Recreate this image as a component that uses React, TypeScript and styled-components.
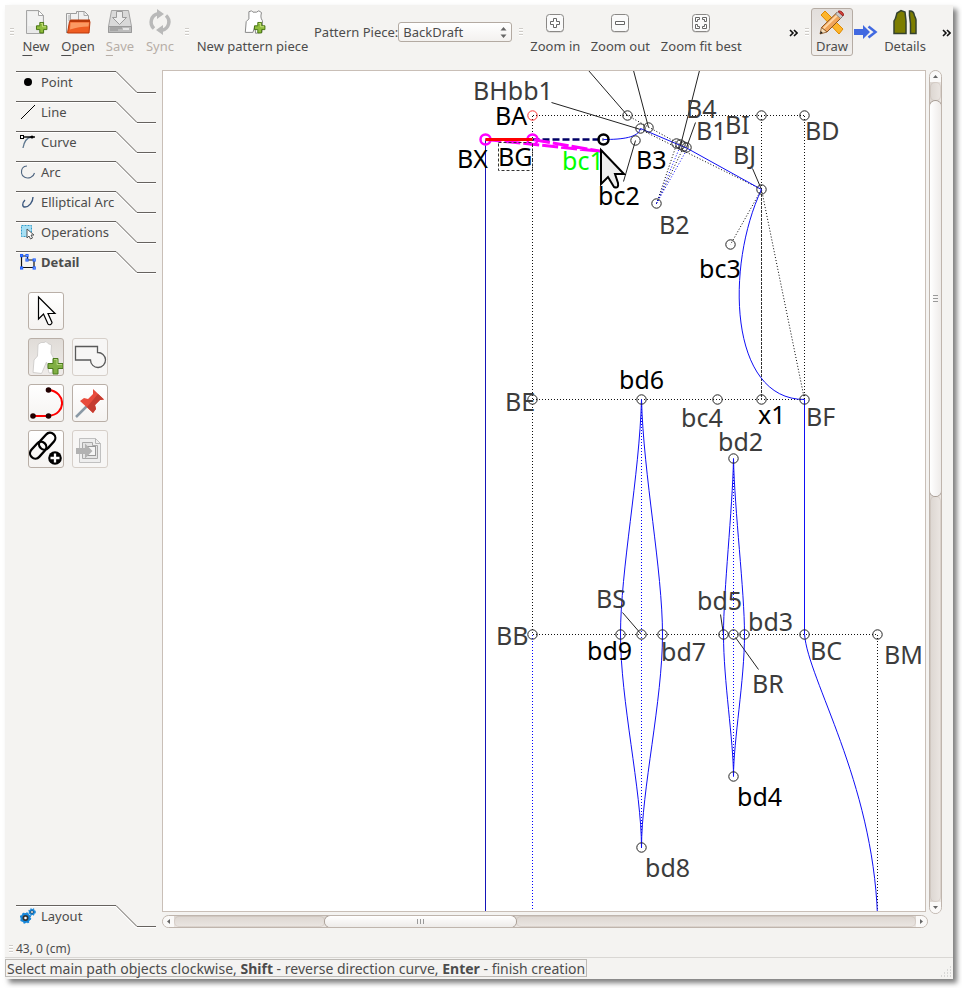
import React, { useState } from "react";
import styled, { createGlobalStyle, css } from "styled-components";

const GlobalStyle = createGlobalStyle`
  *, *::before, *::after { box-sizing: border-box; }
  body {
    margin: 0;
    background: #ffffff;
    color: #4c4c4c;
    font-family: "Noto Sans", "Open Sans", sans-serif;
    font-size: 13px;
    line-height: 16px;
  }
  button, select { font: inherit; color: inherit; margin: 0; }
`;

const Page = styled.div`
  display: flex;
  height: 100vh;
  min-height: 700px;
  padding: 5px 9px 9px 5px;
`;

const Window = styled.div`
  flex: 1;
  min-width: 0;
  display: flex;
  flex-direction: column;
  background: #f4f3f1;
  box-shadow: 4px 4px 5px 0 rgba(0, 0, 0, 0.5);
`;

/* ---------- Toolbar ---------- */

const ToolbarRow = styled.header`
  display: flex;
  align-items: center;
  height: 60px;
  flex: none;
  padding: 0 1px 6px 3px;
`;

const Grip = styled.span`
  flex: none;
  width: 4px;
  height: 8px;
  margin: 0 2px;
  background: repeating-linear-gradient(#cfccc8 0 1px, #ffffff 1px 2px, transparent 2px 3px);
`;

const ToolButton = styled.button<{ $width: number; $active?: boolean }>`
  flex: none;
  display: flex;
  flex-direction: column;
  align-items: center;
  justify-content: space-between;
  width: ${(p) => p.$width}px;
  height: 48px;
  padding: 0 0 1px;
  border: 1px solid ${(p) => (p.$active ? "#b5aca4" : "transparent")};
  border-radius: 3px;
  background: ${(p) => (p.$active ? "linear-gradient(#e2dedb, #f1efed)" : "none")};
  white-space: nowrap;
  &:disabled { color: #b7aea7; }
  u { text-underline-offset: 4px; text-decoration-thickness: 1px; text-decoration-skip-ink: none; }
`;

const Group = styled.div<{ $before?: number }>`
  display: flex;
  align-items: center;
  margin-left: ${(p) => p.$before ?? 0}px;
`;

const Spacer = styled.div`
  flex: 1;
`;

const PieceLabel = styled.label`
  white-space: nowrap;
`;

const SelectWrap = styled.div`
  position: relative;
  width: 114px;
  margin-right: 5px;
  svg { position: absolute; right: 5px; top: 4px; pointer-events: none; }
`;

const PieceSelect = styled.select`
  appearance: none;
  width: 100%;
  height: 20px;
  padding: 0 16px 0 4px;
  border: 1px solid #b3aaa2;
  border-radius: 3px;
  background: linear-gradient(#ffffff, #f3f1ef);
  line-height: 16px;
`;

const Overflow = styled.button<{ $before?: number }>`
  flex: none;
  width: 12px;
  height: 20px;
  margin-left: ${(p) => p.$before ?? 0}px;
  padding: 0;
  border: 0;
  background: none;
`;

const ArrowSlot = styled.span`
  display: flex;
  width: 25px;
  justify-content: center;
`;

/* ---------- Body ---------- */

const Body = styled.main`
  flex: 1;
  min-height: 0;
  display: flex;
  padding: 5px 11px 0 11px;
`;

const Sidebar = styled.nav`
  flex: none;
  width: 146px;
  display: flex;
  flex-direction: column;
  padding: 1px 0;
`;

const TabButton = styled.button<{ $bold?: boolean }>`
  position: relative;
  flex: none;
  display: flex;
  align-items: center;
  gap: 5px;
  width: 140px;
  height: 22px;
  margin-bottom: 8px;
  padding: 0 0 0 4px;
  border: 0;
  background: none;
  text-align: left;
  white-space: nowrap;
  font-weight: ${(p) => (p.$bold ? 700 : 400)};
  &:last-child { margin-bottom: 0; }
`;

const TabEdge = styled.svg`
  position: absolute;
  left: 0;
  top: 0;
`;

const Tools = styled.div`
  flex: 1;
  display: grid;
  grid-template-columns: 36px 36px;
  grid-auto-rows: 38px;
  gap: 8px;
  padding: 11px 0 0 12px;
`;

const Tool = styled.button<{ $pressed?: boolean; $solo?: boolean }>`
  display: flex;
  align-items: center;
  justify-content: center;
  padding: 0;
  border: 1px solid #b9afa7;
  border-radius: 3px;
  background: linear-gradient(#ffffff, #f5f3f1);
  ${(p) => p.$solo && css`grid-column: 1; & + * { grid-column: 1; }`}
  ${(p) => p.$pressed && css`background: linear-gradient(#e0dcd8, #efecea);`}
  &:disabled { border-color: #d6cfc9; background: #f7f6f5; }
`;

const Workspace = styled.section`
  flex: 1;
  min-width: 0;
  display: grid;
  grid-template-columns: minmax(0, 1fr) 13px;
  grid-template-rows: minmax(0, 1fr) 13px;
  gap: 3px;
`;

const Canvas = styled.div`
  border: 1px solid #c9bfb7;
  background: #ffffff;
  overflow: hidden;
`;

const Scene = styled.svg`
  display: block;
  width: 100%;
  height: 100%;
`;

const Scrollbar = styled.div<{ $vertical?: boolean }>`
  display: flex;
  flex-direction: ${(p) => (p.$vertical ? "column" : "row")};
  margin: ${(p) => (p.$vertical ? "0 0 -2px" : "0 -2px 0 0")};
  border: 1px solid #bfb5ad;
  border-radius: 7px;
  background: linear-gradient(${(p) => (p.$vertical ? "90deg" : "180deg")}, #dcd6d1, #ebe6e2);
  overflow: hidden;
`;

const ScrollStep = styled.button`
  flex: none;
  display: flex;
  align-items: center;
  justify-content: center;
  min-width: 11px;
  min-height: 11px;
  padding: 0;
  border: 0;
  background: #faf9f8;
`;

const ScrollGap = styled.div<{ $part: number }>`
  flex: ${(p) => p.$part} 1 0;
  box-shadow: inset 0 0 0 1px rgba(170, 155, 145, 0.25);
  border-radius: 5px;
`;

const Thumb = styled.div<{ $part: number; $vertical?: boolean }>`
  flex: ${(p) => p.$part} 1 0;
  display: flex;
  align-items: center;
  justify-content: center;
  border-radius: 6px;
  background: linear-gradient(${(p) => (p.$vertical ? "90deg" : "180deg")}, #ffffff, #eeebe9);
  box-shadow: 0 0 0 1px #a79d95;
`;

const CoordBar = styled.div`
  flex: none;
  display: flex;
  align-items: center;
  gap: 1px;
  height: 29px;
  padding: 12px 0 0 2px;
  font-size: 12px;
`;

const StatusBar = styled.footer`
  flex: none;
  display: flex;
  align-items: flex-end;
  justify-content: space-between;
  height: 22px;
  padding: 1px 1px 2px 0;
  border-top: 1px solid #d9d7d4;
`;

const StatusText = styled.div`
  height: 18px;
  padding: 0 1px;
  border: 1px solid #bdbab6;
  white-space: nowrap;
  font-size: 14px;
  line-height: 17px;
`;

/* ---------- Icons ---------- */

const PlusBadge = ({ x, y, s = 1 }: { x: number; y: number; s?: number }) => (
  <g transform={`translate(${x} ${y}) scale(${s})`}>
    <path d="M4 0.5h4V4h3.500v4H8v3.500H4V8H0.500V4H4z" fill="#8fbd3c" stroke="#467311" />
    <path d="M5 1.500h2V5h3.500" fill="none" stroke="#c9e27f" strokeWidth="1" />
  </g>
);

const PIECE = "M8 2l3-1 1.500 1.500h4L19 1l3 2c-1 4-1 6 1 9 .5 4-.5 8-.5 13l-7 1-1-8-2 7H4l1-12 3-3z";

const NewIcon = () => (
  <svg width="28" height="26" viewBox="0 0 28 26">
    <path d="M4.500 1.500h12l5 5v18h-17z" fill="#e9e9e9" stroke="#a5a5a5" />
    <path d="M6 3h10v4h4v10H6z" fill="#f5f5f5" opacity=".7" />
    <path d="M16.500 1.500l5 5h-5z" fill="#fff" stroke="#a5a5a5" />
    <PlusBadge x={14} y={13} s={0.95} />
  </svg>
);

const OpenIcon = () => (
  <svg width="28" height="26" viewBox="0 0 28 26">
    <path d="M2.500 24V4.500h10V2.500h8l4 4V20" fill="#f1f1f1" stroke="#9c9c9c" />
    <path d="M6.500 12V4.500M14.500 12V2.500M20 2.500v4h4M5 6v6" fill="none" stroke="#aaa" />
    <path d="M5 12l2-1.500h19V12z" fill="#b73a0a" />
    <path d="M5.500 12.500h20.500l-1 11.500H3.500z" fill="#ef5d22" stroke="#b9380a" />
    <path d="M6.500 13.500h18.500l-.5 4c-7 0-12 1-18.500 3z" fill="#fb9a63" />
  </svg>
);

const SaveIcon = () => (
  <svg width="28" height="26" viewBox="0 0 28 26">
    <path d="M5.500 1.500h17l3 16v6h-23v-6z" fill="#d9d9d9" stroke="#a4a4a4" />
    <path d="M2.500 17.500h23v6h-23z" fill="#bcbcbc" stroke="#9a9a9a" />
    <path d="M4 19h12M4 21h8" stroke="#8e8e8e" />
    <path d="M17 20h6" stroke="#e5e5e5" strokeWidth="2" />
    <path d="M10.500 2.500h6v6h4l-7 7-7-7h4z" fill="#ececec" stroke="#9a9a9a" />
  </svg>
);

const SyncIcon = () => (
  <svg width="26" height="26" viewBox="0 0 26 26" fill="none" stroke="#b9b9b9" strokeWidth="3.500">
    <path d="M7 19.500A8.500 8.500 0 0 1 11 4.800" />
    <path d="M19 6.500A8.500 8.500 0 0 1 15 21.200" />
    <path d="M10 0l7 5-7 5zM16 26l-7-5 7-5z" fill="#b9b9b9" stroke="none" />
  </svg>
);

const NewPieceIcon = () => (
  <svg width="28" height="26" viewBox="0 0 28 26">
    <path d={PIECE} transform="scale(.9) translate(3 1)" fill="#fff" stroke="#888" strokeWidth="1.100" />
    <PlusBadge x={15} y={13} s={0.95} />
  </svg>
);

const ZoomIcon = ({ kind }: { kind: "in" | "out" | "fit" }) => (
  <svg width="20" height="26" viewBox="0 0 20 26">
    <rect x="1.500" y="6.500" width="17" height="17" rx="3" fill="#c4c2c0" stroke="none" />
    <rect x="1.500" y="5.500" width="17" height="17" rx="3" fill="#fafafa" stroke="#8a8886" />
    <g fill="#fff" stroke="#666" strokeWidth="1">
      {kind === "in" && <path d="M8.500 9.500h3v3h3v3h-3v3h-3v-3h-3v-3h3z" />}
      {kind === "out" && <path d="M5.500 12.500h9v3h-9z" />}
      {kind === "fit" && (
        <path d="M4.500 8.500h4v2h-2v2h-2zM15.500 8.500h-4v2h2v2h2zM4.500 19.500h4v-2h-2v-2h-2zM15.500 19.500h-4v-2h2v-2h2z" />
      )}
    </g>
  </svg>
);

const DrawIcon = () => (
  <svg width="28" height="26" viewBox="0 0 28 26">
    <path d="M3 6l4-4 18 18-4 5z" fill="#fdb52b" stroke="#e08a00" />
    <path d="M3.500 18.500L19 3.500l5 4.500L9 23z" fill="#f0a45a" stroke="#8a5220" />
    <path d="M5.500 19.500L20 5.500" stroke="#ffd6a5" strokeWidth="2" />
    <path d="M3.500 18.500L2 25l7-2z" fill="#f6deb9" stroke="#8a5220" strokeWidth=".8" />
    <path d="M2 25l.8-3 2 2z" fill="#222" />
    <path d="M17.500 5L20 2.500l5 4.500-2.500 2.500z" fill="#c9c9c9" stroke="#777" strokeWidth=".7" />
    <path d="M20 2.500c2-2 7 2 5 4.500z" fill="#d9433c" stroke="#9a221d" />
  </svg>
);

const BlueArrow = () => (
  <svg width="24" height="14" viewBox="0 0 24 14">
    <path d="M0 4h9V0l7 7-7 7v-4H0z" fill="#4169e1" />
    <path d="M14.500 1.500L21.500 7l-7 5.500" fill="none" stroke="#4169e1" strokeWidth="2.500" />
  </svg>
);

const DetailsIcon = () => (
  <svg width="26" height="26" viewBox="0 0 26 26" fill="#7c7d00" stroke="#34422f" strokeWidth="1.500">
    <path d="M2 24.500V12c2-2 2-5 3-8l4-2.500 4 1.500 1 9v12.500z" />
    <path d="M18.500 24.500v-10l-1-8V2c3-.5 4 1 4.500 3 .5 3 2 4 2 6v13.500z" />
  </svg>
);

const MoreIcon = () => (
  <svg width="9" height="8" viewBox="0 0 9 8" fill="none" stroke="#111" strokeWidth="1.600">
    <path d="M1 1l3 3-3 3M5 1l3 3-3 3" />
  </svg>
);

const tabIcons: Record<string, React.ReactNode> = {
  Point: <circle cx="8" cy="8" r="4" fill="#000" />,
  Line: <path d="M1 15L15 1" stroke="#000" />,
  Curve: (
    <>
      <path d="M3 14C4 8 6 4 11 3" fill="none" stroke="#5f7890" strokeWidth="1.300" />
      <path d="M2 3h13" stroke="#000" strokeWidth="1.400" />
      <rect x=".5" y="1.500" width="3" height="3" fill="#fff" stroke="#000" />
      <circle cx="12" cy="3" r="1.600" />
    </>
  ),
  Arc: <path d="M7 2C3 2 1 5 1.500 9c.5 4 5 6 9 4.500C13 12.500 14 11 14.500 9" fill="none" stroke="#4f6681" strokeWidth="1.100" />,
  "Elliptical Arc": <path d="M5 6c-3 3-3 7 0 7 4 0 8-5 8-10" fill="none" stroke="#3e5a80" strokeWidth="1.400" />,
  Operations: (
    <>
      <rect x="1.500" y="1.500" width="10" height="11" fill="#a6e0f5" stroke="#2f9bc9" strokeDasharray="2 1" />
      <path d="M7 5v9l2-2 1.500 3 2-1-1.500-3h3z" fill="#fff" stroke="#555" />
    </>
  ),
  Detail: (
    <>
      <path d="M1.500 2h6v4h6.500v7.500H1.500z" fill="none" stroke="#111" strokeWidth="1.200" />
      <g fill="#fff" stroke="#2463ff" strokeWidth="1.200">
        <rect x=".6" y=".6" width="2" height="2" /><rect x="6" y=".6" width="2" height="2" />
        <rect x="6" y="5" width="2" height="2" /><rect x="13.200" y="5" width="2" height="2" />
        <rect x=".6" y="13" width="2" height="2" /><rect x="13.200" y="13" width="2" height="2" />
      </g>
    </>
  ),
  Layout: (
    <>
      <circle cx="5.500" cy="10" r="4" fill="#333" stroke="#1686d9" strokeWidth="2" />
      <circle cx="5.500" cy="10" r="4.800" fill="none" stroke="#1686d9" strokeWidth="1.800" strokeDasharray="1.800 2" />
      <circle cx="5.500" cy="10" r="1.300" fill="#fff" />
      <circle cx="12" cy="4" r="2.300" fill="#333" stroke="#1686d9" strokeWidth="1.500" />
      <circle cx="12" cy="4" r="3.200" fill="none" stroke="#1686d9" strokeWidth="1.200" strokeDasharray="1.300 1.300" />
      <circle cx="12" cy="4" r=".9" fill="#fff" />
    </>
  ),
};

const ArrowTool = () => (
  <svg width="34" height="36" viewBox="0 0 34 36">
    <path d="M9.500 4v22l5-5 4.500 10c1 1.500 4 .5 4-1.500l-4-9h7z" fill="#fff" stroke="#000" strokeWidth="1.200" />
  </svg>
);
const PieceTool = () => (
  <svg width="34" height="36" viewBox="0 0 34 36">
    <path d="M9 5.500l3-2h3l2-1 2 2 3.500 1.500-.5 8 3 6-2 14h-3l-2.500-11-4 9.500-1 2-8.500-1L5 21l3.500-4z" fill="#fff" stroke="#d2d0ce" />
    <path d="M24 19.500h5v5h5v5h-5v5.500h-5v-5.500h-5v-5h5z" fill="#80af43" stroke="#4a7a1c" />
    <path d="M25 20.500h3v5h5" fill="none" stroke="#b5d481" />
  </svg>
);
const UnionTool = () => (
  <svg width="34" height="36" viewBox="0 0 34 36">
    <path d="M2.500 7.500h22v6a7.500 7.500 0 1 1-7 7.500h-15z" fill="none" stroke="#5a5a5a" strokeWidth="1.300" />
  </svg>
);
const PathTool = () => (
  <svg width="34" height="36" viewBox="0 0 34 36">
    <path d="M4 31h15.500C38 29 37 7 20 5" fill="none" stroke="#f00" strokeWidth="2" />
    <circle cx="4" cy="31" r="2.800" fill="#200" /><circle cx="19.500" cy="31" r="2.800" fill="#200" /><circle cx="19.500" cy="5" r="2.800" fill="#200" />
  </svg>
);
const PinTool = () => (
  <svg width="34" height="36" viewBox="0 0 34 36">
    <path d="M15 20L3 32" stroke="#8a99a5" strokeWidth="2.500" />
    <path d="M20 4l11 10.500-4 .5-5 5 1 4-3 4L7 16l4-3 4 1 5-5z" fill="#e84b3c" />
    <path d="M31 14.500l-4 .5-5 5 1 4-3 4-6-6L25 9z" fill="#c53c30" />
  </svg>
);
const LinkTool = () => (
  <svg width="34" height="36" viewBox="0 0 34 36" fill="none" stroke="#000" strokeWidth="2.300">
    <rect x="-9.500" y="-5" width="19" height="10.500" rx="5.200" transform="translate(18 10) rotate(-48)" />
    <rect x="-9.500" y="-5" width="19" height="10.500" rx="5.200" transform="translate(9 19) rotate(-48)" />
    <circle cx="26" cy="27" r="6.800" fill="#000" stroke="none" />
    <path d="M26 22.500v9M21.500 27h9" stroke="#fff" strokeWidth="2.300" />
  </svg>
);
const InsertTool = () => (
  <svg width="34" height="36" viewBox="0 0 34 36">
    <path d="M6.500 7.500h16l5 5v19h-21z" fill="#eeeeee" stroke="#c0c0c0" />
    <path d="M22.500 7.500v5h5" fill="none" stroke="#b5b5b5" />
    <path d="M9.500 11.500h10v3h5v13h-15z" fill="#e4e4e4" stroke="#a8a8a8" />
    <rect x="13.500" y="15.500" width="9" height="9" fill="#f5f5f5" stroke="#999" />
    <path d="M3 17h9v-4.500l7.500 7.500-7.500 7.500V23H3z" fill="#b2b2b2" />
  </svg>
);

/* ---------- Drawing scene ---------- */

type Segment = [number, number, number, number];

const dotted: Segment[] = [
  [532, 115, 804, 115], [532, 115, 532, 634], [532, 399, 804, 399], [532, 634, 877, 634],
  [761, 115, 761, 189], [804, 115, 804, 399], [877, 634, 877, 911],
];
const dottedSlanted: Segment[] = [
  [761, 189, 804, 399], [761, 189, 730, 244], [627, 115, 687, 148],
  [656, 203, 676, 144], [656, 203, 683, 147], [640, 129, 761, 189],
];
const dottedBlue: Segment[] = [
  [532, 634, 532, 911], [641, 399, 641, 847], [733, 458, 733, 776],
];
const dottedBlueSlanted: Segment[] = [
  [656, 203, 680, 145], [656, 203, 687, 148],
];
const leaders: Segment[] = [
  [588, 70, 627, 115], [633, 70, 648, 127], [699, 70, 680, 145], [551, 102, 640, 129],
  [695, 122, 686, 147], [623, 181, 635, 140], [752, 168, 761, 189], [622, 612, 641, 634],
  [720, 614, 723, 634], [758, 669, 735, 637],
];
const curves = [
  "M603 139C622 139 638 137 640 128L687 148L761 189",
  "M761 189C725 265 728 399 804 399V634",
  "M804 634C808 680 872 780 877 915",
  "M641 399C639 475 620 570 620 634C620 700 641 790 641 847",
  "M641 399C643 475 662 570 662 634C662 700 641 790 641 847",
  "M733 458C732 510 723 590 723 634C723 680 733 740 733 776",
  "M733 458C734 510 744 590 744 634C744 680 733 740 733 776",
];
const points: [number, number][] = [
  [627, 115], [761, 115], [804, 115], [640, 128], [648, 127], [635, 140],
  [676, 143], [680, 144], [683, 146], [686, 147], [656, 203], [761, 189], [730, 244],
  [532, 399], [641, 399], [717, 399], [761, 399], [804, 399], [733, 458],
  [532, 634], [620, 634], [641, 634], [662, 634], [723, 634], [733, 634], [744, 634],
  [804, 634], [877, 634], [733, 776], [641, 847],
];

const labels: { text: string; x: number; y: number; color?: string }[] = [
  { text: "BHbb1", x: 473, y: 100 },
  { text: "BA", x: 495, y: 125, color: "#000" },
  { text: "BX", x: 457, y: 168, color: "#000" },
  { text: "BG", x: 498, y: 166, color: "#000" },
  { text: "bc1", x: 562, y: 170, color: "#0f0" },
  { text: "bc2", x: 598, y: 205, color: "#000" },
  { text: "B3", x: 636, y: 169, color: "#000" },
  { text: "B4", x: 686, y: 118 },
  { text: "B1", x: 696, y: 140 },
  { text: "BI", x: 725, y: 134 },
  { text: "BJ", x: 733, y: 164 },
  { text: "BD", x: 805, y: 140 },
  { text: "B2", x: 659, y: 234 },
  { text: "bc3", x: 699, y: 278, color: "#000" },
  { text: "BE", x: 505, y: 411 },
  { text: "bd6", x: 619, y: 389, color: "#000" },
  { text: "bc4", x: 681, y: 427 },
  { text: "x1", x: 758, y: 424, color: "#000" },
  { text: "BF", x: 806, y: 426 },
  { text: "bd2", x: 718, y: 451 },
  { text: "BS", x: 596, y: 608 },
  { text: "bd5", x: 697, y: 610 },
  { text: "bd3", x: 748, y: 631 },
  { text: "BB", x: 496, y: 645 },
  { text: "bd9", x: 587, y: 660, color: "#000" },
  { text: "bd7", x: 661, y: 661 },
  { text: "BC", x: 810, y: 660 },
  { text: "BM", x: 884, y: 664 },
  { text: "BR", x: 752, y: 693 },
  { text: "bd4", x: 737, y: 806, color: "#000" },
  { text: "bd8", x: 645, y: 877 },
];

const SceneLabel = styled.text`
  font-family: "Noto Sans", "Open Sans", sans-serif;
  font-size: 25px;
`;

const Lines = ({ items }: { items: Segment[] }) => (
  <>
    {items.map(([x1, y1, x2, y2], i) => (
      <line key={i} x1={x1} y1={y1} x2={x2} y2={y2} />
    ))}
  </>
);

const Draft = () => (
  <Scene aria-label="BackDraft">
    <g transform="translate(-162.5 -70.5)" fill="none">
      <g strokeDasharray="1 2" shapeRendering="crispEdges">
        <g stroke="#111"><Lines items={dotted} /></g>
        <g stroke="#0000ff"><Lines items={dottedBlue} /></g>
      </g>
      <g strokeDasharray="1 2">
        <g stroke="#000"><Lines items={dottedSlanted} /></g>
        <g stroke="#0000ff"><Lines items={dottedBlueSlanted} /></g>
      </g>
      <path d="M761 189V399" stroke="#333" strokeDasharray="3 1" shapeRendering="crispEdges" />
      <g stroke="#222"><Lines items={leaders} /></g>
      <path d="M485 139V912" stroke="#1515b8" />
      <g stroke="#0f0ff5">{curves.map((d) => <path key={d} d={d} />)}</g>
      <g stroke="#222">{points.map(([x, y]) => <circle key={`${x}-${y}`} cx={x} cy={y} r="4.700" />)}</g>
      <circle cx="532" cy="115" r="4.700" stroke="#f33" />
      <path d="M532 139H603" stroke="#000066" strokeWidth="2.500" strokeDasharray="7 3" />
      <path d="M485 139L602 151L532 139" stroke="#f0f" strokeWidth="3" strokeDasharray="16 3" />
      <g strokeWidth="2.500">
        <circle cx="603" cy="139" r="5" stroke="#000" />
        <circle cx="485" cy="139" r="5" stroke="#f0f" />
        <circle cx="532" cy="139" r="5" stroke="#f0f" />
      </g>
      <path d="M485 139H532" stroke="#f00" strokeWidth="3" />
      <rect x="498" y="142" width="34" height="28" stroke="#333" strokeDasharray="3 2" />
    </g>
    <g transform="translate(-163 -71)">
      {labels.map((l) => (
        <SceneLabel key={l.text} x={l.x} y={l.y} fill={l.color ?? "#3c3c3c"}>{l.text}</SceneLabel>
      ))}
      <path d="M601 150V184L608 177L614 187Q619 189 618 183L615 174H624Z" fill="#eee" stroke="#000" strokeWidth="2" />
    </g>
  </Scene>
);

/* ---------- Composition ---------- */

const Tab = ({ name, bold }: { name: string; bold?: boolean }) => (
  <TabButton type="button" $bold={bold}>
    <TabEdge width="140" height="23" viewBox="0 0 140 23" aria-hidden="true" fill="none">
      <path d="M0 1.500H99.500L120 22.500H140" stroke="#fff" />
      <path d="M0 .5H100L121 21.500H140" stroke="#66625f" />
    </TabEdge>
    <svg width="16" height="16" viewBox="0 0 16 16" aria-hidden="true">{tabIcons[name]}</svg>
    {name}
  </TabButton>
);

const Arrow = ({ d }: { d: string }) => (
  <svg width="7" height="7" viewBox="0 0 7 7" fill="#666" aria-hidden="true"><path d={d} /></svg>
);

export default function App() {
  const [piece, setPiece] = useState("BackDraft");
  return (
    <Page>
      <GlobalStyle />
      <Window>
        <ToolbarRow>
          <Group>
            <Grip />
            <ToolButton type="button" $width={40}><NewIcon /><span><u>N</u>ew</span></ToolButton>
            <ToolButton type="button" $width={44}><OpenIcon /><span><u>O</u>pen</span></ToolButton>
            <ToolButton type="button" $width={40} disabled><SaveIcon /><span><u>S</u>ave</span></ToolButton>
            <ToolButton type="button" $width={40} disabled><SyncIcon /><span>Sync</span></ToolButton>
          </Group>
          <Group $before={3}>
            <Grip />
            <ToolButton type="button" $width={123}><NewPieceIcon /><span>New pattern piece</span></ToolButton>
            <PieceLabel htmlFor="piece">Pattern Piece:</PieceLabel>
            <SelectWrap>
              <PieceSelect id="piece" value={piece} onChange={(e) => setPiece(e.target.value)}>
                <option>BackDraft</option>
              </PieceSelect>
              <svg width="7" height="13" viewBox="0 0 7 13" fill="#666" aria-hidden="true"><path d="M3.500 1L6.500 4.500H.5zM3.500 12L6.500 8.500H.5z" /></svg>
            </SelectWrap>
          </Group>
          <Group>
            <Grip />
            <ToolButton type="button" $width={60}><ZoomIcon kind="in" /><span>Zoom in</span></ToolButton>
            <ToolButton type="button" $width={70}><ZoomIcon kind="out" /><span>Zoom out</span></ToolButton>
            <ToolButton type="button" $width={92}><ZoomIcon kind="fit" /><span>Zoom fit best</span></ToolButton>
          </Group>
          <Spacer />
          <Overflow type="button" aria-label="More zoom tools"><MoreIcon /></Overflow>
          <Group $before={4}>
            <Grip />
            <ToolButton type="button" $width={42} $active><DrawIcon /><span>Draw</span></ToolButton>
            <ArrowSlot><BlueArrow /></ArrowSlot>
            <ToolButton type="button" $width={54}><DetailsIcon /><span>Details</span></ToolButton>
          </Group>
          <Overflow type="button" aria-label="More modes" $before={8}><MoreIcon /></Overflow>
        </ToolbarRow>

        <Body>
          <Sidebar>
            {["Point", "Line", "Curve", "Arc", "Elliptical Arc", "Operations"].map((n) => <Tab key={n} name={n} />)}
            <Tab name="Detail" bold />
            <Tools>
              <Tool type="button" aria-label="Pointer" $solo><ArrowTool /></Tool>
              <Tool type="button" aria-label="New detail" $pressed><PieceTool /></Tool>
              <Tool type="button" aria-label="Union" disabled><UnionTool /></Tool>
              <Tool type="button" aria-label="Internal path"><PathTool /></Tool>
              <Tool type="button" aria-label="Pin"><PinTool /></Tool>
              <Tool type="button" aria-label="Insert node"><LinkTool /></Tool>
              <Tool type="button" aria-label="Import" disabled><InsertTool /></Tool>
            </Tools>
            <Tab name="Layout" />
          </Sidebar>
          <Workspace>
            <Canvas><Draft /></Canvas>
            <Scrollbar $vertical>
              <ScrollStep type="button" aria-label="Up"><Arrow d="M3.500 2L6 5H1z" /></ScrollStep>
              <ScrollGap $part={19} />
              <Thumb $part={393} $vertical>
                <svg width="5" height="7" viewBox="0 0 5 7" stroke="#999"><path d="M0 .5h5M0 3.500h5M0 6.500h5" /></svg>
              </Thumb>
              <ScrollGap $part={405} />
              <ScrollStep type="button" aria-label="Down"><Arrow d="M3.500 5L6 2H1z" /></ScrollStep>
            </Scrollbar>
            <Scrollbar>
              <ScrollStep type="button" aria-label="Left"><Arrow d="M2 3.500L5 1v5z" /></ScrollStep>
              <ScrollGap $part={151} />
              <Thumb $part={191}>
                <svg width="7" height="5" viewBox="0 0 7 5" stroke="#999"><path d="M.5 0v5M3.500 0v5M6.500 0v5" /></svg>
              </Thumb>
              <ScrollGap $part={400} />
              <ScrollStep type="button" aria-label="Right"><Arrow d="M5 3.500L2 1v5z" /></ScrollStep>
            </Scrollbar>
          </Workspace>
        </Body>

        <CoordBar><Grip /><span>43, 0 (cm)</span></CoordBar>
        <StatusBar>
          <StatusText>
            Select main path objects clockwise, <b>Shift</b> - reverse direction curve, <b>Enter</b> - finish creation
          </StatusText>
          <svg width="12" height="12" viewBox="0 0 12 12" aria-hidden="true">
            <path d="M10 2h1M7 5h4M4 8h7M1 11h10" stroke="#bbb" strokeWidth="1" strokeDasharray="1 2" />
          </svg>
        </StatusBar>
      </Window>
    </Page>
  );
}
